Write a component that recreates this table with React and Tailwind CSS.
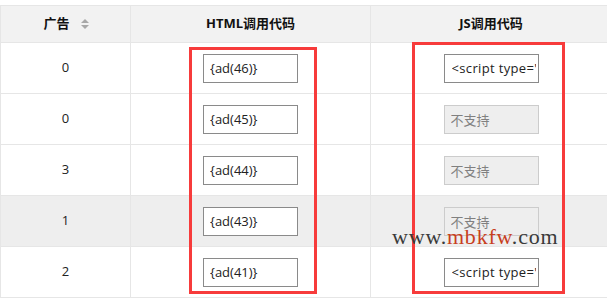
import React from "react";

const FONT = { fontFamily: '"Open Sans", "Noto Sans CJK SC", sans-serif' };

const SCRIPT_CODE = "<script type='text/javascript' src='/index.php?m=home&c=Other&a=ad&id=";

const rows = [
  { count: 0, id: 46, js: true },
  { count: 0, id: 45, js: false },
  { count: 3, id: 44, js: false },
  { count: 1, id: 43, js: false, hover: true },
  { count: 2, id: 41, js: true },
];

function SortIcon() {
  return (
    <svg width="8" height="10" viewBox="0 0 8 10" className="shrink-0">
      <path d="M4 0 L8 4 L0 4 Z" fill="#a8a8a8" />
      <path d="M0 6 L8 6 L4 10 Z" fill="#a8a8a8" />
    </svg>
  );
}

function CodeInput({ value }) {
  return (
    <input
      readOnly
      value={value}
      className="w-[95px] h-[29px] border border-[#8a8a8a] bg-white pl-[6px] pr-0 text-[13px] text-[#222] outline-none"
      style={FONT}
    />
  );
}

function ScriptInput({ value }) {
  return (
    <input
      readOnly
      value={value}
      className="w-[95px] h-[29px] border border-[#8a8a8a] bg-white pl-[7px] pr-[2px] text-[13px] tracking-[0.35px] text-[#222] outline-none"
      style={FONT}
    />
  );
}

function DisabledInput() {
  return (
    <input
      disabled
      value="不支持"
      className="w-[95px] h-[29px] border border-[#cccccc] bg-[#eeeeee] pl-[6px] pr-0 text-[13px] text-[#808080] outline-none"
      style={FONT}
    />
  );
}

export default function App() {
  return (
    <div className="relative w-[607px] h-[301px] overflow-hidden bg-white pt-[5px]" style={FONT}>
      <div className="w-[611px] border-l border-t border-[#e6e6e6]">
        {/* header */}
        <div className="flex h-[37px] bg-[#f2f2f2] border-b border-[#e6e6e6] text-[13px] font-bold text-[#111]">
          <div className="w-[130px] shrink-0 border-r border-[#e6e6e6] flex items-center justify-center gap-[11px] pl-[1px]">
            <span>广告</span>
            <SortIcon />
          </div>
          <div className="w-[240px] shrink-0 border-r border-[#e6e6e6] flex items-center justify-center">
            HTML调用代码
          </div>
          <div className="w-[240px] shrink-0 flex items-center justify-center">
            JS调用代码
          </div>
        </div>

        {/* body */}
        {rows.map((r) => (
          <div
            key={r.id}
            className={`flex h-[51px] border-b border-[#e6e6e6] text-[13px] text-[#222] ${r.hover ? "bg-[#eeeeee]" : "bg-white"}`}
          >
            <div className="w-[130px] shrink-0 border-r border-[#e6e6e6] flex items-center justify-center">
              {r.count}
            </div>
            <div className="w-[240px] shrink-0 border-r border-[#e6e6e6] flex items-center justify-center">
              <CodeInput value={`{ad(${r.id})}`} />
            </div>
            <div className="w-[240px] shrink-0 flex items-center justify-center">
              {r.js ? <ScriptInput value={`${SCRIPT_CODE}${r.id}'></script>`} /> : <DisabledInput />}
            </div>
          </div>
        ))}
      </div>

      {/* highlight frames */}
      <div className="absolute left-[189px] top-[47px] w-[128px] h-[247px] border-[3px] border-[#f73b3b]" />
      <div className="absolute left-[412px] top-[42px] w-[153px] h-[252px] border-[3px] border-[#f73b3b]" />

      {/* site mark */}
      <div
        className="absolute left-[392px] top-[226px] text-[22px] leading-none tracking-[0.8px] text-[#3a3a3a]"
        style={{ fontFamily: '"Liberation Serif", serif' }}
      >
        www.<span className="text-[#c8401e]">mbkfw</span>.com
      </div>
    </div>
  );
}
